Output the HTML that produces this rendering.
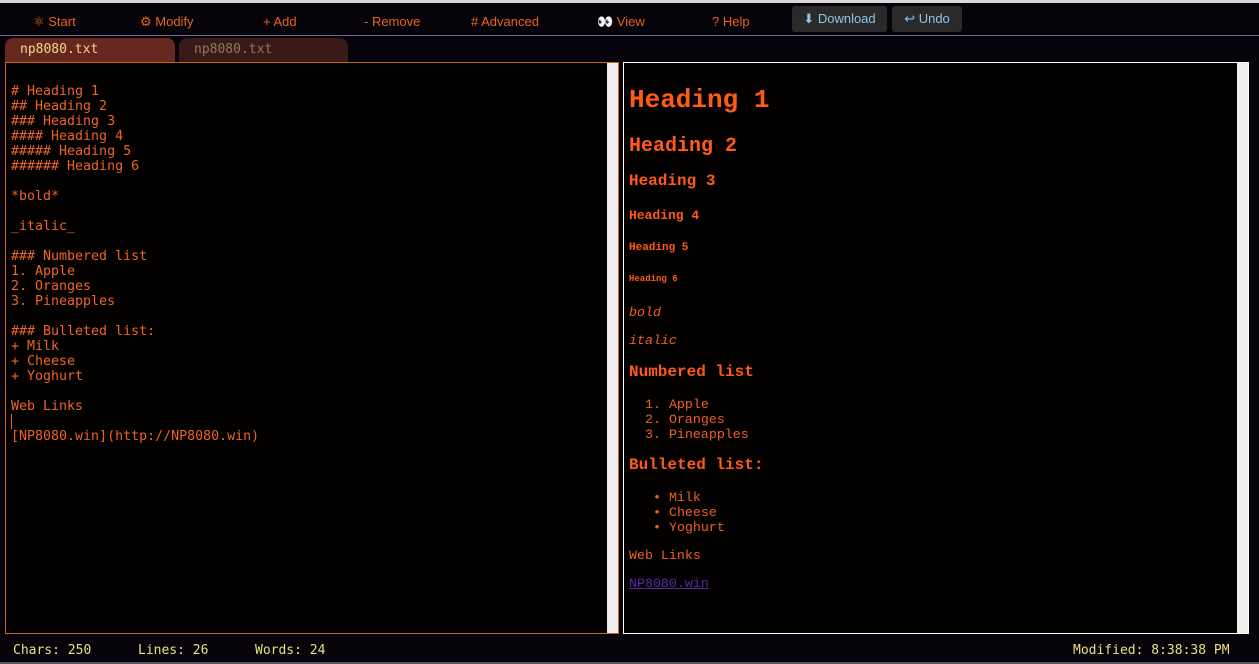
<!DOCTYPE html>
<html><head><meta charset="utf-8"><style>
*{margin:0;padding:0;box-sizing:border-box}
body{width:1259px;height:664px;background:#07030a;position:relative;overflow:hidden;font-family:"Liberation Sans",sans-serif}
.top{position:absolute;left:0;top:0;width:1259px;height:3px;background:#d8d8d8}
.menu{position:absolute;top:14px;font-size:13px;color:#e8641e}
.btn{position:absolute;top:6px;height:26px;background:#2a2a2a;border-radius:3px;color:#8ec6e6;font-size:13px;line-height:26px;text-align:center}
.sep{position:absolute;left:0;top:35px;width:1259px;height:1px;background:#6a6a8a}
.tab{position:absolute;top:38px;height:25px;border-radius:8px 8px 0 0;font-family:"DejaVu Sans Mono","Liberation Mono",monospace;font-size:13px;line-height:23px;padding-left:15px}
.ed{position:absolute;left:5px;top:62px;width:614px;height:572px;border:1px solid #c8641e;background:#030000}
.sb{position:absolute;background:#eeeeee}
.pv{position:absolute;left:623px;top:62px;width:626px;height:572px;border:1px solid #ffffff;background:#030000}
.t{position:absolute;white-space:pre;font-family:"DejaVu Sans Mono","Liberation Mono",monospace;font-size:13.3px;line-height:15px;color:#ee6424}
.p{position:absolute;white-space:pre;font-family:"Liberation Mono",monospace;color:#f0601e;left:629px}
.h{font-weight:bold;color:#ff5a18}
.st{position:absolute;top:643px;font-family:"DejaVu Sans Mono",monospace;font-size:13px;color:#e8e080}
.bot{position:absolute;left:0;top:662px;width:1259px;height:2px;background:#555}
</style></head><body>
<div class="top"></div>
<div class="menu" style="left:33px">⚛ Start</div>
<div class="menu" style="left:140px">⚙ Modify</div>
<div class="menu" style="left:263px">+ Add</div>
<div class="menu" style="left:364px">- Remove</div>
<div class="menu" style="left:471px"># Advanced</div>
<div class="menu" style="left:597px">👀 View</div>
<div class="menu" style="left:712px">? Help</div>
<div class="btn" style="left:792px;width:95px">⬇ Download</div>
<div class="btn" style="left:892px;width:70px">↩ Undo</div>
<div class="sep"></div>
<div class="tab" style="left:5px;width:170px;background:#66281e;color:#f0d890">np8080.txt</div>
<div class="tab" style="left:179px;width:169px;background:#3a1a16;color:#8a7a60">np8080.txt</div>
<div class="ed"></div>
<div class="sb" style="left:607px;top:63px;width:11px;height:570px"></div>
<div class="pv"></div>
<div class="sb" style="left:1237px;top:63px;width:11px;height:570px"></div>
<div class="t" style="left:11px;top:84px"># Heading 1
## Heading 2
### Heading 3
#### Heading 4
##### Heading 5
###### Heading 6

*bold*

_italic_

### Numbered list
1. Apple
2. Oranges
3. Pineapples

### Bulleted list:
+ Milk
+ Cheese
+ Yoghurt

Web Links
<span style="display:inline-block;width:1px;height:15px;background:#ee6424;vertical-align:top"></span>
[NP8080.win](http://NP8080.win)</div>
<div class="p h" style="top:85px;font-size:26px">Heading 1</div>
<div class="p h" style="top:135px;font-size:20px">Heading 2</div>
<div class="p h" style="top:172px;font-size:16px">Heading 3</div>
<div class="p h" style="top:208px;font-size:13px">Heading 4</div>
<div class="p h" style="top:242px;font-size:11px">Heading 5</div>
<div class="p h" style="top:274px;font-size:9px">Heading 6</div>
<div class="p" style="top:305px;font-size:13.3px;font-style:italic">bold</div>
<div class="p" style="top:333px;font-size:13.3px;font-style:italic">italic</div>
<div class="p h" style="top:363px;font-size:16px">Numbered list</div>
<div class="p" style="top:397px;font-size:13.3px;line-height:15px;left:645px">1. Apple
2. Oranges
3. Pineapples</div>
<div class="p h" style="top:456px;font-size:16px">Bulleted list:</div>
<div class="p" style="top:490px;font-size:13.3px;line-height:15px;left:653px">• Milk
• Cheese
• Yoghurt</div>
<div class="p" style="top:548px;font-size:13.3px">Web Links</div>
<div class="p" style="top:576px;font-size:13.3px;color:#5a28a8;text-decoration:underline">NP8080.win</div>
<div class="st" style="left:13px">Chars: 250</div>
<div class="st" style="left:138px">Lines: 26</div>
<div class="st" style="left:255px">Words: 24</div>
<div class="st" style="left:1073px">Modified: 8:38:38 PM</div>
<div class="bot"></div>
</body></html>
